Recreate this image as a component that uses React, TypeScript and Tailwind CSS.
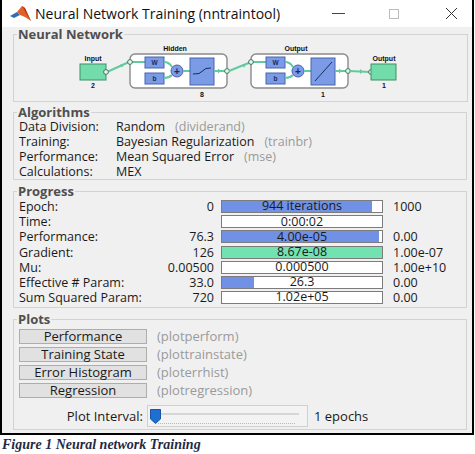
import React from 'react';

type Row = {
  label: string;
  start: string;
  bar: string;
  fill: number;
  color?: string;
  end: string;
};

const progress: Row[] = [
  { label: 'Epoch:', start: '0', bar: '944 iterations', fill: 94, color: '#7091e6', end: '1000' },
  { label: 'Time:', start: '', bar: '0:00:02', fill: 0, end: '' },
  { label: 'Performance:', start: '76.3', bar: '4.00e-05', fill: 98, color: '#7091e6', end: '0.00' },
  { label: 'Gradient:', start: '126', bar: '8.67e-08', fill: 100, color: '#72e2b0', end: '1.00e-07' },
  { label: 'Mu:', start: '0.00500', bar: '0.000500', fill: 0, end: '1.00e+10' },
  { label: 'Effective # Param:', start: '33.0', bar: '26.3', fill: 20, color: '#7091e6', end: '0.00' },
  { label: 'Sum Squared Param:', start: '720', bar: '1.02e+05', fill: 0, end: '0.00' },
];

const algorithms = [
  ['Data Division:', 'Random', '(dividerand)'],
  ['Training:', 'Bayesian Regularization', '(trainbr)'],
  ['Performance:', 'Mean Squared Error', '(mse)'],
  ['Calculations:', 'MEX', ''],
];

const plots = [
  ['Performance', '(plotperform)'],
  ['Training State', '(plottrainstate)'],
  ['Error Histogram', '(ploterrhist)'],
  ['Regression', '(plotregression)'],
];

function Panel({ title, className, children }: { title: string; className?: string; children: React.ReactNode }) {
  return (
    <fieldset className={`border border-[#d3d3d3] ${className ?? ''}`}>
      <legend className="ml-[3px] px-[1px] text-[13px] font-bold leading-[14px] text-[#4f4f4f]">{title}</legend>
      {children}
    </fieldset>
  );
}

function Layer({ x, label, size, curve }: { x: number; label: string; size: string; curve: 'tansig' | 'purelin' }) {
  // x = left edge of the rounded layer box
  const blue = '#7b9be6';
  const edge = '#4a64ad';
  const green = '#63c9a0';
  return (
    <g>
      <text x={x + 45} y={51} fontSize="7" fontWeight="bold" textAnchor="middle" fill="#111">{label}</text>
      <rect x={x} y={54} width={97} height={34} rx={5} fill="#fff" stroke="#8a8a8a" strokeWidth={1.4} />
      <line x1={x + 2} y1={62} x2={x + 15} y2={62} stroke={green} strokeWidth={2} />
      <circle cx={x} cy={62} r={2.4} fill="#e8f6ef" stroke="#3b7b5c" strokeWidth={1} />
      <rect x={x + 15} y={57} width={19} height={11} fill={blue} stroke={edge} />
      <text x={x + 24.5} y={65} fontSize="6.5" fontWeight="bold" textAnchor="middle" fill="#1b2a5c">W</text>
      <rect x={x + 15} y={73} width={19} height={11} fill={blue} stroke={edge} />
      <text x={x + 24.5} y={81} fontSize="6.5" fontWeight="bold" textAnchor="middle" fill="#1b2a5c">b</text>
      <path d={`M${x + 34} 62 Q${x + 39} 62 ${x + 42} 67`} fill="none" stroke={green} strokeWidth={2} />
      <path d={`M${x + 34} 78 Q${x + 39} 78 ${x + 42} 75`} fill="none" stroke={green} strokeWidth={2} />
      <circle cx={x + 47} cy={71} r={6} fill={blue} stroke={edge} />
      <text x={x + 47} y={74.5} fontSize="10" fontWeight="bold" textAnchor="middle" fill="#1b2a5c">+</text>
      <line x1={x + 53} y1={71} x2={x + 60} y2={71} stroke={green} strokeWidth={2} />
      <rect x={x + 60} y={58} width={24} height={27} fill={blue} stroke={edge} />
      {curve === 'tansig' ? (
        <polyline points={`${x + 63},74 ${x + 69},73.5 ${x + 76},68.5 ${x + 81},68`} fill="none" stroke="#1b2a5c" strokeWidth={1} />
      ) : (
        <line x1={x + 64} y1={81} x2={x + 81} y2={62} stroke="#1b2a5c" strokeWidth={1} />
      )}
      <line x1={x + 84} y1={71} x2={x + 96} y2={71} stroke={green} strokeWidth={2} />
      <path d={`M${x + 88} 68.5 L${x + 91} 71 L${x + 88} 73.5 Z`} fill={green} />
      <circle cx={x + 97} cy={71} r={2.4} fill="#e8f6ef" stroke="#3b7b5c" strokeWidth={1} />
      <text x={x + 72} y={97} fontSize="7" fontWeight="bold" textAnchor="middle" fill="#111">{size}</text>
    </g>
  );
}

function Diagram() {
  const green = '#63c9a0';
  return (
    <svg viewBox="13 41 453 60" width={453} height={60} className="block font-['Liberation_Sans',sans-serif]">
      {/* input */}
      <text x={92} y={61} fontSize="7" fontWeight="bold" textAnchor="middle" fill="#111">Input</text>
      <rect x={79} y={64} width={26} height={16} fill="#72dcaa" stroke="#3f8f69" />
      <text x={92} y={88} fontSize="7" fontWeight="bold" textAnchor="middle" fill="#111">2</text>
      <line x1={106} y1={72} x2={128} y2={62} stroke={green} strokeWidth={2} />
      <path d="M119 64.5 L123 64.2 L121 67.8 Z" fill={green} />
      <circle cx={105} cy={72} r={2.4} fill="#e8f6ef" stroke="#3b7b5c" strokeWidth={1} />
      <Layer x={129} label="Hidden" size="8" curve="tansig" />
      <line x1={228} y1={71} x2={250} y2={62} stroke={green} strokeWidth={2} />
      <path d="M241 64.5 L245 64.2 L243 67.8 Z" fill={green} />
      <Layer x={250} label="Output" size="1" curve="purelin" />
      <line x1={348} y1={71} x2={369} y2={72} stroke={green} strokeWidth={2} />
      <path d="M359 69 L362 71.5 L359 74 Z" fill={green} />
      <circle cx={370} cy={72} r={2.4} fill="#e8f6ef" stroke="#3b7b5c" strokeWidth={1} />
      <rect x={370} y={64} width={25} height={16} fill="#72dcaa" stroke="#3f8f69" />
      <text x={383} y={61} fontSize="7" fontWeight="bold" textAnchor="middle" fill="#111">Output</text>
      <text x={383} y={88} fontSize="7" fontWeight="bold" textAnchor="middle" fill="#111">1</text>
    </svg>
  );
}

function MatlabLogo() {
  return (
    <svg width="22" height="18" viewBox="0 0 22 18" className="block">
      <polygon points="0,11 7,7 10,10 4,13" fill="#2f6db5" />
      <polygon points="7,7 12,1 15,3 21,16 15,12 10,10" fill="#e0622a" />
      <polygon points="12,1 15,3 21,16 17,10" fill="#b83c16" />
    </svg>
  );
}

export default function App() {
  return (
    <div className="w-[475px] h-[454px] bg-white font-['Open_Sans',sans-serif] text-[13px] text-[#1a1a1a]">
      <div className="w-[474px] border-x-2 border-b-2 border-black">
        {/* title bar */}
        <div className="flex h-[27px] items-center bg-white">
          <div className="ml-[8px]">
            <MatlabLogo />
          </div>
          <span className="ml-[3px] text-[14px] leading-none text-[#111]">Neural Network Training (nntraintool)</span>
          <div className="ml-auto mr-[14px] flex items-center">
            <span className="block h-px w-[13px] bg-[#444]" />
            <span className="ml-[44px] block h-[10px] w-[10px] border border-[#bdbdbd]" />
            <svg width="13" height="13" viewBox="0 0 13 13" className="ml-[46px] block">
              <path d="M1 1 L12 12 M12 1 L1 12" stroke="#333" strokeWidth="1" />
            </svg>
          </div>
        </div>

        {/* body */}
        <div className="flex h-[406px] flex-col bg-[#f0f0f0] pl-[11px] pr-[5px]">
          <Panel title="Neural Network" className="h-[75px]">
            <Diagram />
          </Panel>

          <Panel title="Algorithms" className="mt-[3px] h-[75px]">
            <div className="pl-[5px]">
              {algorithms.map(([l, v, g]) => (
                <div key={l} className="flex h-[15px] items-center text-[12.5px] leading-[15px]">
                  <span className="w-[97px]">{l}</span>
                  <span>{v}</span>
                  {g && <span className="ml-[10px] text-[#9a9a9a]">{g}</span>}
                </div>
              ))}
            </div>
          </Panel>

          <Panel title="Progress" className="mt-[4px] h-[124px]">
            <div className="pl-[5px] pt-[1px]">
              {progress.map((r) => (
                <div key={r.label} className="flex h-[15.2px] items-center text-[12.5px] leading-[15px]">
                  <span className="w-[130px]">{r.label}</span>
                  <span className="w-[65px] text-right">{r.start}</span>
                  <div className="relative ml-[7px] h-[13px] w-[162px] border border-[#7c7c7c] bg-white">
                    {r.fill > 0 && (
                      <div className="h-full" style={{ width: `${r.fill}%`, background: r.color }} />
                    )}
                    <span className="absolute inset-0 flex items-center justify-center leading-none">{r.bar}</span>
                  </div>
                  <span className="ml-[10px]">{r.end}</span>
                </div>
              ))}
            </div>
          </Panel>

          <Panel title="Plots" className="mt-[4px] h-[118px]">
            <div className="flex flex-col gap-[3px] pl-[5px] pt-[3px]">
              {plots.map(([b, f]) => (
                <div key={b} className="flex items-center leading-none">
                  <button className="flex h-[15px] w-[128px] items-center justify-center border border-[#adadad] bg-[#e1e1e1] leading-none">
                    {b}
                  </button>
                  <span className="ml-[10px] text-[#9a9a9a]">{f}</span>
                </div>
              ))}
              <div className="mt-[4px] flex items-center leading-none">
                <span className="w-[124px] text-right">Plot Interval:</span>
                <div className="relative ml-[4px] h-[22px] w-[161px] border border-[#d0d0d0] bg-[#f3f3f3]">
                  <div className="absolute left-[6px] right-[8px] top-[7px] h-[2px] bg-[#d6d6d6]" />
                  <div className="absolute bottom-[2px] left-[10px] right-[12px] h-[3px] border-b border-dotted border-[#b8b8b8]" />
                  <svg width="11" height="15" viewBox="0 0 11 15" className="absolute left-[2px] top-[3px]">
                    <path d="M0.5 0.5 H10.5 V10 L5.5 14.5 L0.5 10 Z" fill="#1e6fd0" stroke="#1556a8" />
                  </svg>
                </div>
                <span className="ml-[6px]">1 epochs</span>
              </div>
            </div>
          </Panel>
        </div>
      </div>
      <div className="pl-[2px] pt-[2px] font-['Liberation_Serif',serif] text-[14px] font-bold italic leading-[16px] text-[#1f2a44]">
        Figure 1 Neural network Training
      </div>
    </div>
  );
}
